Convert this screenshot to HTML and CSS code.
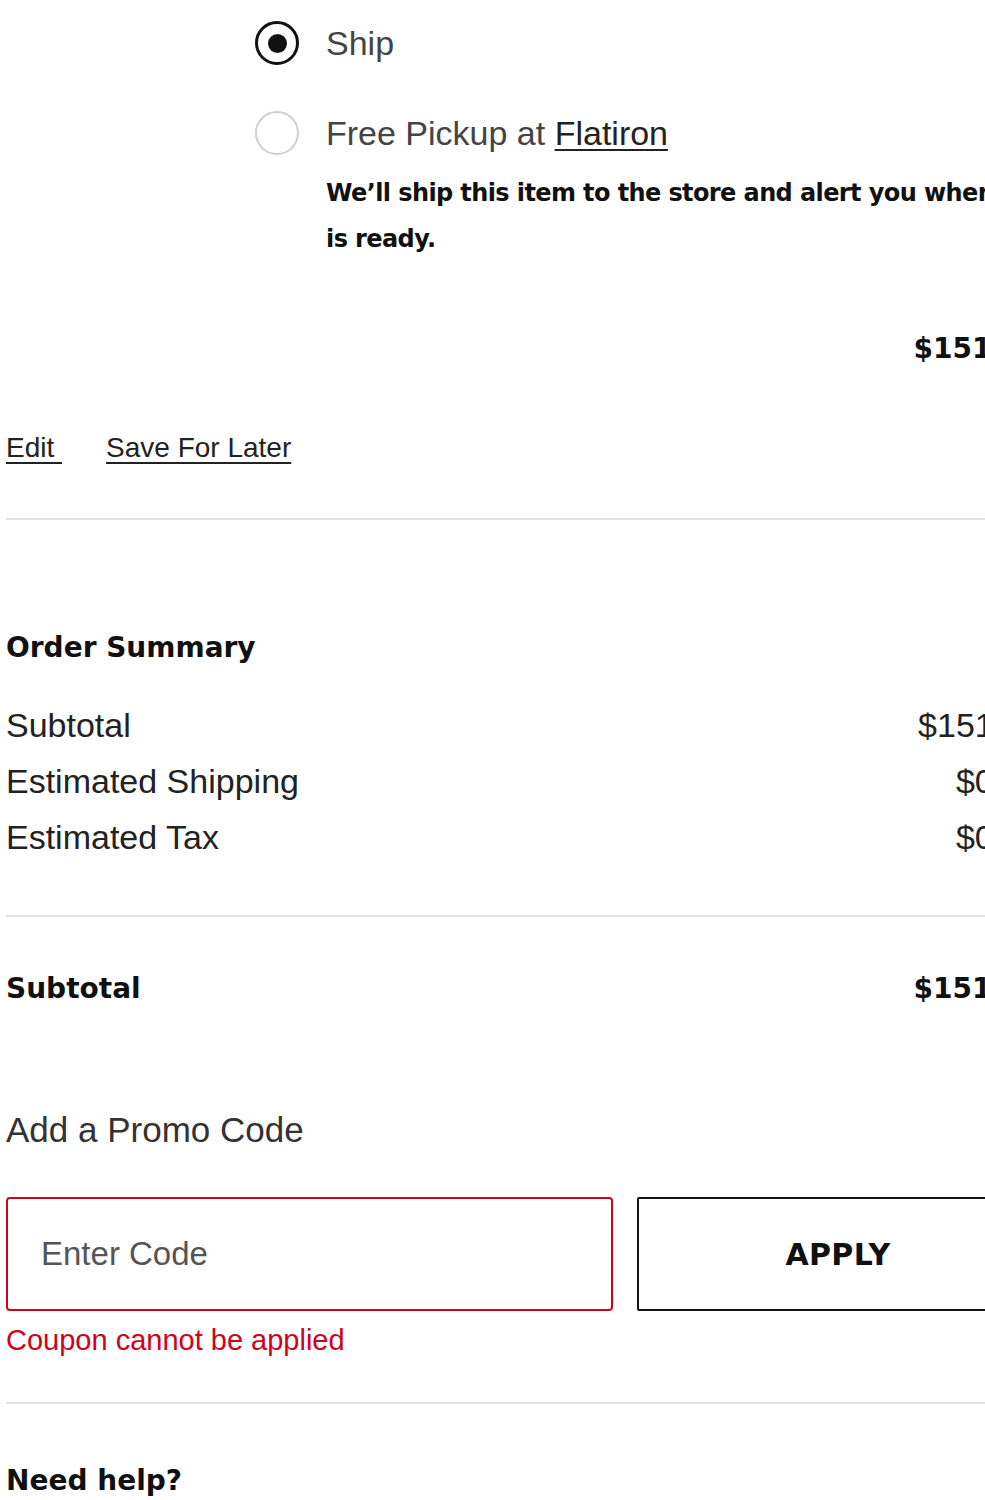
FILE: index.html
```html
<!DOCTYPE html>
<html lang="en">
<head>
<meta charset="utf-8">
<title>Cart</title>
<link rel="stylesheet" href="styles.css">
</head>
<body>
<div class="page">
  <section class="item">
    <div class="item-media"></div>
    <div class="item-body">
      <label class="option option-ship">
        <input class="radio" type="radio" name="fulfil" checked>
        <span class="option-label">Ship</span>
      </label>
      <label class="option option-pickup">
        <input class="radio" type="radio" name="fulfil">
        <span class="option-label">Free Pickup at <a class="store-link" href="#">Flatiron</a></span>
      </label>
      <p class="option-note">We’ll ship this item to the store and alert you when it is ready.</p>
    </div>
  </section>
  <div class="item-price">$151.00</div>
  <div class="item-actions">
    <a href="#" class="action-link action-edit">Edit&nbsp;</a>
    <a href="#" class="action-link">Save For Later</a>
  </div>
  <hr class="divider divider-item">

  <section class="summary">
    <h2 class="summary-title">Order Summary</h2>
    <div class="summary-rows">
      <div class="summary-row"><span>Subtotal</span><span>$151.00</span></div>
      <div class="summary-row"><span>Estimated Shipping</span><span>$0.00</span></div>
      <div class="summary-row"><span>Estimated Tax</span><span>$0.00</span></div>
    </div>
    <hr class="divider divider-summary">
    <div class="summary-total"><span>Subtotal</span><span>$151.00</span></div>
  </section>

  <section class="promo">
    <h3 class="promo-title">Add a Promo Code</h3>
    <form class="promo-form">
      <input class="promo-input" type="text" placeholder="Enter Code">
      <button class="promo-apply" type="button">APPLY</button>
    </form>
    <p class="promo-error">Coupon cannot be applied</p>
  </section>
  <hr class="divider divider-promo">

  <h2 class="help-title">Need help?</h2>
</div>
</body>
</html>
```

FILE: styles.css
```css
html, body {
  margin: 0;
  padding: 0;
  overflow: hidden;
  background: #ffffff;
}

body {
  font-family: "Liberation Sans", Arial, sans-serif;
  color: #222222;
}

.page {
  width: 1035px;
  padding-left: 6px;
}

/* ---------- item ---------- */
.item {
  display: flex;
}

.item-media {
  width: 249px;
  flex: none;
}

.item-body {
  flex: 1;
  min-width: 0;
}

.option {
  display: flex;
  align-items: center;
  gap: 27px;
  height: 44px;
  cursor: pointer;
}

.option-ship {
  margin-top: 21px;
}

.option-pickup {
  margin-top: 46px;
}

.radio {
  appearance: none;
  -webkit-appearance: none;
  margin: 0;
  width: 44px;
  height: 44px;
  flex: none;
  box-sizing: border-box;
  border-radius: 50%;
  border: 2px solid #cfcfcf;
  background: #ffffff;
  display: flex;
  align-items: center;
  justify-content: center;
}

.radio:checked {
  border: 3px solid #111111;
}

.radio:checked::after {
  content: "";
  width: 19px;
  height: 19px;
  border-radius: 50%;
  background: #111111;
}

.option-label {
  font-size: 34px;
  line-height: 44px;
  color: #444444;
}

.store-link {
  color: #222222;
  text-decoration: underline;
  text-underline-offset: 4px;
  text-decoration-thickness: 2px;
}

.option-note {
  margin: 15px 0 0 71px;
  font-family: "DejaVu Sans", sans-serif;
  font-weight: 700;
  font-size: 24px;
  line-height: 46px;
  color: #111111;
  letter-spacing: -0.6px;
}

.item-price {
  margin-top: 67px;
  text-align: right;
  font-family: "DejaVu Sans", sans-serif;
  font-weight: 700;
  font-size: 28px;
  line-height: 40px;
  color: #111111;
}

.item-actions {
  margin-top: 59px;
  display: flex;
  gap: 44px;
  line-height: 40px;
}

.action-link {
  font-size: 28px;
  color: #222222;
  text-decoration: underline;
  text-underline-offset: 5px;
  text-decoration-thickness: 2px;
}

/* ---------- dividers ---------- */
.divider {
  border: 0;
  border-top: 2px solid #e2e2e2;
  margin: 0;
  height: 0;
}

.divider-item {
  margin-top: 50px;
}

/* ---------- summary ---------- */
.summary-title,
.summary-total,
.help-title {
  font-family: "DejaVu Sans", sans-serif;
  font-weight: 700;
  font-size: 28px;
  line-height: 40px;
  color: #111111;
  margin: 0;
}

.summary-title {
  margin-top: 108px;
}

.summary-rows {
  margin-top: 29px;
}

.summary-row {
  display: flex;
  justify-content: space-between;
  font-size: 34px;
  line-height: 56px;
  color: #222222;
}

.divider-summary {
  margin-top: 50px;
}

.summary-total {
  display: flex;
  justify-content: space-between;
  margin-top: 52px;
}

/* ---------- promo ---------- */
.promo-title {
  margin: 96px 0 0;
  font-weight: 400;
  font-size: 35px;
  line-height: 50px;
  color: #333333;
}

.promo-form {
  margin-top: 42px;
  display: flex;
  gap: 24px;
  height: 114px;
}

.promo-input {
  width: 607px;
  flex: none;
  box-sizing: border-box;
  height: 114px;
  border: 2px solid #d0021b;
  border-radius: 4px;
  padding: 0 0 0 33px;
  font-family: "Liberation Sans", Arial, sans-serif;
  font-size: 33px;
  color: #222222;
  background: #ffffff;
  outline: none;
}

.promo-input::placeholder {
  color: #555555;
}

.promo-apply {
  width: 402px;
  flex: none;
  box-sizing: border-box;
  height: 114px;
  border: 2px solid #111111;
  border-radius: 2px;
  background: #ffffff;
  font-family: "DejaVu Sans", sans-serif;
  font-weight: 700;
  font-size: 30px;
  color: #111111;
  padding: 0;
  letter-spacing: 0.3px;
}

.promo-error {
  margin: 9px 0 0;
  font-size: 29px;
  line-height: 40px;
  color: #d0021b;
}

.divider-promo {
  margin-top: 42px;
}

.help-title {
  margin-top: 57px;
}
```
